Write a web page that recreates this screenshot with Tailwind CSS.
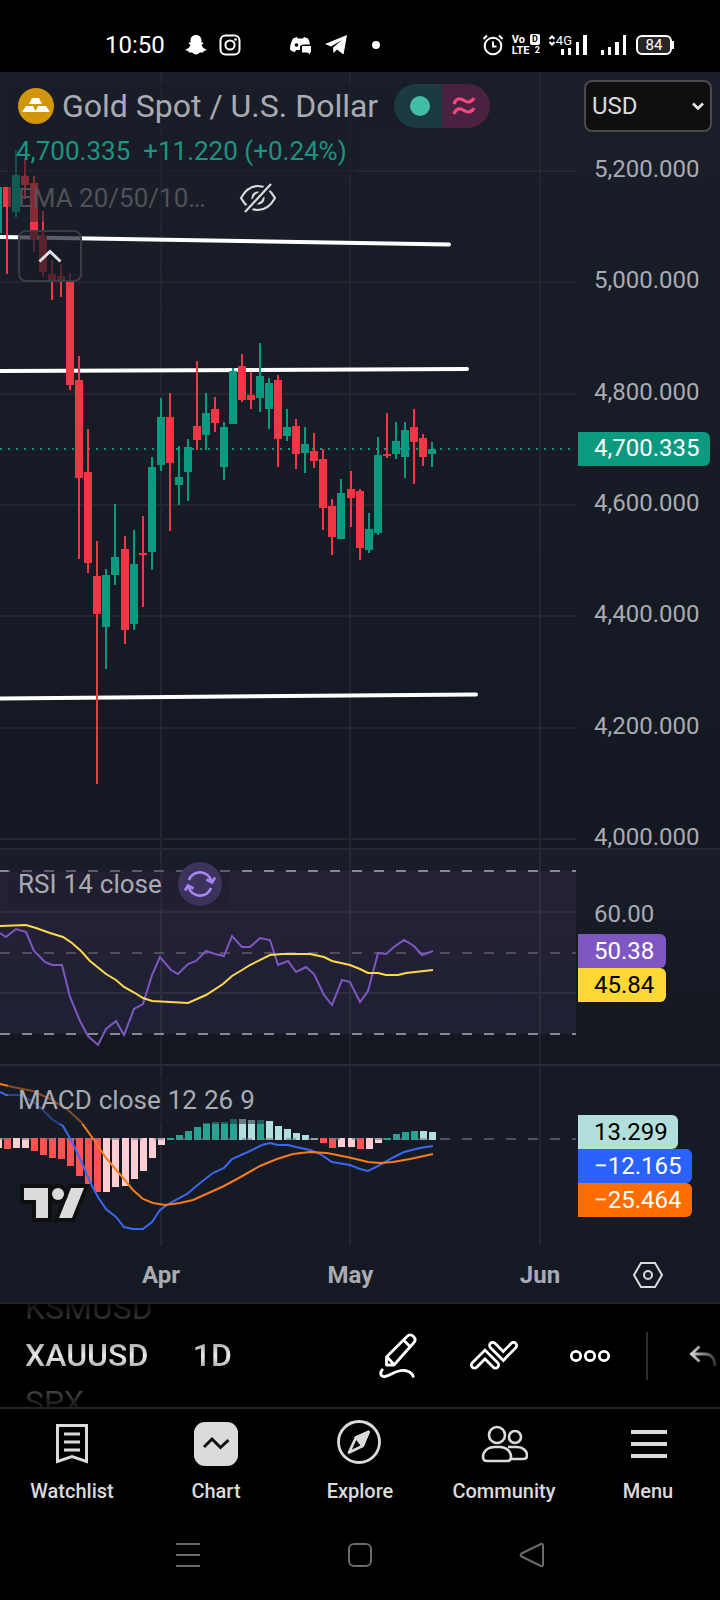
<!DOCTYPE html>
<html lang="en">
<head>
    <meta charset="UTF-8">
    <meta name="viewport" content="width=device-width, initial-scale=1.0">
    <title>XAUUSD - Chart</title>
    <script src="https://cdn.jsdelivr.net/npm/@tailwindcss/browser@4"></script>
</head>
<body class="bg-black font-['Roboto',sans-serif] text-[#a9abb3]">
    <!-- status bar -->
    <header class="flex h-[72px] items-center bg-black pt-[18px] pr-[46px] pl-[105px] text-white">
        <span class="text-2xl leading-8">10:50</span>
        <svg class="ml-5 h-[22px] w-[22px]" viewBox="0 0 22 22" fill="currentColor"><path d="M11 1c3.500 0 5.500 2.400 5.500 5.600v2c.7 0 1.800-.2 1.900.5.1.8-1.400 1.200-1.800 1.700.6 2.400 2.300 4 4.900 4.700.1 1-1.900 1.300-2.700 1.600-.3.600-.2 1.100-.7 1.300-.9.200-2-.2-3.100.2-1.300.6-2.200 2-4 2s-2.700-1.400-4-2c-1.100-.4-2.200 0-3.100-.2-.5-.2-.4-.7-.7-1.300-.8-.3-2.800-.6-2.700-1.600 2.600-.7 4.300-2.300 4.900-4.700-.4-.5-1.900-.9-1.800-1.700.1-.7 1.200-.5 1.900-.5v-2C5.500 3.400 7.500 1 11 1z"/></svg>
        <svg class="ml-3 h-[22px] w-[22px]" viewBox="0 0 22 22" fill="none" stroke="currentColor" stroke-width="2"><rect x="1.500" y="1.500" width="19" height="19" rx="5"/><circle cx="11" cy="11" r="4.600"/><circle cx="16.500" cy="5.500" r="1.300" fill="currentColor" stroke="none"/></svg>
        <svg class="ml-12 h-[22px] w-[23px]" viewBox="0 0 23 22" fill="currentColor"><path d="M8 3 4 4.500C2 8 1 11.500 1 15.500 2.500 17 4 17.700 6 18l1-2h4v-4l3-1.500h7c-.3-2.200-1-4.200-2-6L15 3l-1 1.500H9z"/><circle cx="7.500" cy="11" r="1.800" fill="#000"/><path d="M13 12h9v6.500h-1V20.500l-2.500-2H13z"/></svg>
        <svg class="ml-3 h-[22px] w-[24px]" viewBox="0 0 24 22" fill="currentColor"><path d="M1 10 23 1l-3.500 19.500-6.500-5-3.500 3.500-.5-5.500L18 6 7 12.500z"/></svg>
        <span class="ml-6 h-2 w-2 rounded-full bg-white"></span>
        <svg class="ml-auto h-[22px] w-[22px]" viewBox="0 0 22 22" fill="none" stroke="currentColor" stroke-width="2"><circle cx="11" cy="12" r="8.300"/><path d="M11 7.500v5h3.500M1.500 5 5 1.500M20.500 5 17 1.500"/></svg>
        <span class="ml-2 flex w-7 flex-col text-[11px] leading-[11px] font-bold">
            <span class="flex justify-between">Vo<span class="rounded-xs bg-white px-[2px] text-[9px] leading-[10px] text-black">D</span></span>
            <span class="flex justify-between">LTE<span class="text-[9px] leading-[11px]">2</span></span>
        </span>
        <svg class="ml-2 h-[22px] w-2" viewBox="0 0 8 22" fill="none" stroke="currentColor" stroke-width="2"><path d="M1.500 5 4 2.500 6.500 5M1.500 8 4 10.500 6.500 8"/></svg>
        <span class="mb-2 text-[13px] leading-4">4G</span>
        <svg class="-ml-3 h-[22px] w-[28px]" viewBox="0 0 28 22" fill="currentColor"><path d="M1 15h3v6H1zM8 14h3v7H8zM16 8h3v13h-3zM23 1h4v20h-4z"/></svg>
        <svg class="ml-3 h-[22px] w-[28px]" viewBox="0 0 28 22" fill="currentColor"><path d="M1 16h3v5H1zM8 13h3v8H8zM15 8h4v13h-4zM23 1h3v20h-3z"/></svg>
        <span class="ml-2 flex h-5 w-9 items-center justify-center rounded-md border-2 border-white bg-neutral-800 text-[15px] leading-4">84</span>
        <span class="h-2 w-[2px] bg-white"></span>
    </header>

    <main>
        <!-- price pane -->
        <section class="relative grid h-[776px] grid-cols-[1fr_144px] bg-linear-to-b from-[#1a1e29] to-[#141822]">
            <svg id="price" class="h-full w-full" viewBox="0 72 576 776" preserveAspectRatio="none" fill="none">
                <path d="M0 171h576M0 282h576M0 394h576M0 505h576M0 616h576M0 728h576M0 839h576M161 72v776M350 72v776M540 72v776" stroke="#22262f" stroke-width="2"/>
                <path d="M0 449h576" stroke="#0f9a80" stroke-width="2" stroke-dasharray="2 6"/>
                <path d="M0 237 449 244.500M0 371 467 369M0 698.500 476 694.500" stroke="#fff" stroke-width="4" stroke-linecap="round"/>
                <g id="candles"></g>
            </svg>
            <div class="flex flex-col pr-2 pl-2">
                <div class="relative mt-2">
                    <label for="currency" class="sr-only">Currency</label>
                    <select id="currency" class="h-[52px] w-full appearance-none rounded-lg border-2 border-[#4a4a4a] bg-[#0f0f0f] pl-1.5 text-2xl leading-8 text-[#dbdbdb]">
                        <option>USD</option>
                        <option>EUR</option>
                    </select>
                    <svg class="pointer-events-none absolute top-5 right-2 h-3 w-3" viewBox="0 0 12 12" fill="none" stroke="#e8e8e8" stroke-width="2.500"><path d="m1 3.500 5 5 5-5"/></svg>
                </div>
                <div class="mt-[25px] -mb-[1px] flex flex-1 flex-col justify-between pl-2.5 text-2xl leading-6">
                    <span>5,200.000</span>
                    <span>5,000.000</span>
                    <span>4,800.000</span>
                    <span>4,600.000</span>
                    <span>4,400.000</span>
                    <span>4,200.000</span>
                    <span>4,000.000</span>
                </div>
            </div>
            <span class="absolute top-[360px] right-2.5 h-[34px] w-[132px] rounded-r-md bg-[#0b997f] pl-4 text-2xl leading-8 text-white">4,700.335</span>

            <div class="absolute top-3 left-2 flex flex-col items-start">
                <div class="flex h-11 items-center bg-[#191d28]/60 pl-2.5">
                    <svg class="h-9 w-9" viewBox="0 0 36 36"><circle cx="18" cy="18" r="18" fill="#d1960b"/><path d="M14 10h7l3 6H11zM8 18h7l3 6H4zM20 18h8l4 6H17z" fill="#fff"/></svg>
                    <h1 class="ml-2 text-[32px] leading-9">Gold Spot / U.S. Dollar</h1>
                    <span class="ml-4 flex h-11 overflow-hidden rounded-full">
                        <span class="flex w-12 items-center justify-center bg-[#1c3a40]"><span class="ml-1 h-5 w-5 rounded-full bg-[#42bda8]"></span></span>
                        <span class="flex w-12 items-center justify-center bg-[#4a213f]">
                            <svg class="mr-1 h-[22px] w-6" viewBox="0 0 24 22" fill="none" stroke="#f7487f" stroke-width="3.200"><path d="M2 9C4 3 8 3 12 5.500s7.500 2 10-2.500M2 19c2-6 6-6 10-3.500s7.500 2 10-2.500"/></svg>
                        </span>
                    </span>
                </div>
                <p class="h-[46px] bg-[#191d28]/60 px-2 text-[26px] leading-[46px] whitespace-pre text-[#1a9580]">4,700.335  +11.220 (+0.24%)</p>
                <div class="flex h-12 items-center bg-[#191d28]/50 px-2.5">
                    <span class="text-[26px] leading-8 text-[#4f5159]">EMA 20/50/10…</span>
                    <button aria-label="Show indicator" class="ml-8">
                        <svg class="h-8 w-10" viewBox="0 0 40 32" fill="none" stroke="#dbdbdb" stroke-width="2.200"><path d="M3 16C8 7 13 4 20 4s12 3 17 12c-5 9-10 12-17 12S8 25 3 16z"/><circle cx="20" cy="16" r="5.500"/><path d="M33 2 7 30" stroke="#181c27" stroke-width="7"/><path d="M33 2 7 30"/></svg>
                    </button>
                </div>
                <button aria-label="Collapse legend" class="mt-2 ml-2.5 flex h-[52px] w-16 items-center justify-center rounded-lg border-2 border-[#3b3d45] bg-[#171b26]/70">
                    <svg class="h-4 w-6" viewBox="0 0 24 16" fill="none" stroke="#dfe0e4" stroke-width="3"><path d="m1.500 13.500 10.500-10 10.500 10"/></svg>
                </button>
            </div>
        </section>

        <!-- rsi pane -->
        <section class="relative grid h-[216px] grid-cols-[1fr_144px] border-t-2 border-[#252933] bg-linear-to-b from-[#191d28] to-[#131720]">
            <svg class="h-full w-full" viewBox="0 1 576 214" preserveAspectRatio="none" fill="none">
                <defs>
                    <linearGradient id="band" x1="0" y1="0" x2="0" y2="1"><stop offset="0" stop-color="#252136"/><stop offset="1" stop-color="#1e2034"/></linearGradient>
                </defs>
                <rect y="22" width="576" height="163" fill="url(#band)"/>
                <path d="M0 63h576M0 144h576M161 0v215M350 0v215M540 0v215" stroke="#fff" stroke-opacity=".06" stroke-width="2"/>
                <path d="M0 22h576M0 185h576" stroke="#868892" stroke-width="2" stroke-dasharray="10 12"/>
                <path d="M0 104h576" stroke="#4f4e5c" stroke-width="2" stroke-dasharray="10 12"/>
                <polyline stroke="#7e57c2" stroke-width="2" points="0,84 6,88 16,80 26,83 34,102 45,113 52,116 62,116 70,148 80,172 88,187 98,196 106,180 116,172 124,186 134,160 143,155 152,126 160,108 171,121 178,125 188,115 196,112 206,102 215,105 224,107 232,87 242,98 250,98 260,89 270,91 278,116 288,112 296,123 306,118 314,125 324,146 332,156 342,131 350,133 360,153 368,142 378,104 386,105 394,98 404,91 414,97 422,106 433,102"/>
                <polyline stroke="#fdd94a" stroke-width="2" points="0,77 26,76 36,79 50,84 63,88 72,94 81,102 90,112 106,125 116,131 124,138 135,144 143,149 152,152 188,154 206,146 223,135 232,127 242,121 250,116 270,106 282,105 310,105 324,108 332,112 350,116 360,120 368,124 378,124 386,126 398,126 406,124 433,121"/>
            </svg>
            <div class="flex flex-col items-start pt-[50px] pl-[2px] text-2xl leading-[34px]">
                <span class="h-[34px] pl-4 leading-7">60.00</span>
                <span class="h-[34px] rounded-r-md bg-[#7e57c2] pr-3 pl-4 leading-[34px] text-white">50.38</span>
                <span class="h-[34px] rounded-r-md bg-[#fdd835] pr-3 pl-4 leading-[34px] text-black">45.84</span>
            </div>
            <div class="absolute top-2.5 left-2 flex h-12 items-center gap-4 bg-[#1b1d2a]/40 pr-2 pl-2.5">
                <span class="flex gap-[7px] text-[26px] leading-8"><span>RSI</span><span>14</span><span>close</span></span>
                <button aria-label="Refresh RSI" class="flex h-11 w-11 items-center justify-center rounded-full bg-[#3d325c]">
                    <svg class="h-8 w-8" viewBox="0 0 32 32" fill="none" stroke="#a587f5" stroke-width="2.800"><path d="M5 12a11.800 11.800 0 0 1 22.500 1.500M27 20A11.800 11.800 0 0 1 4.500 18.500M22.500 11.500l5.500 3 3-5M9.500 20.500l-5.500-3-3 5"/></svg>
                </button>
            </div>
        </section>

        <!-- macd pane -->
        <section class="relative grid h-[182px] grid-cols-[1fr_144px] border-t-2 border-[#2a2e38] bg-[#161a25]">
            <svg class="h-full w-full" viewBox="0 1 576 180" preserveAspectRatio="none" fill="none">
                <path d="M161 0v181M350 0v181M540 0v181" stroke="#22262f" stroke-width="2"/>
                <g id="histogram"></g>
                <path d="M0 74h576" stroke="#787b86" stroke-opacity=".6" stroke-width="2" stroke-dasharray="10 12"/>
                <polyline stroke="#3a68ee" stroke-width="2" points="0,27 6,30 20,30 32,36 42,44 53,55 63,61 72,77 82,98 90,117 98,132 106,144 116,152 124,162 133,164 143,164 152,157 160,145 170,138 187,129 200,118 213,108 224,103 232,94 250,86 262,80 270,78 278,80 288,80 296,82 310,85 320,89 332,97 350,100 360,104 368,106 378,101 394,92 404,87 420,83 433,81"/>
                <polyline stroke="#f57c1f" stroke-width="2" points="0,19 13,22 33,26 50,34 67,44 81,57 94,75 106,93 124,114 133,125 143,134 153,138 165,140 180,138 193,135 213,126 224,121 237,114 260,101 277,94 293,89 310,87 327,88 347,92 360,95 368,97 380,98 393,97 410,94 433,89"/>
            </svg>
            <div class="flex flex-col items-start pt-[49px] pl-[2px] text-2xl text-white">
                <span class="h-[34px] rounded-r-md bg-[#b2dfdb] pr-2.5 pl-4 leading-[34px] text-black">13.299</span>
                <span class="h-[34px] rounded-r-md bg-[#2962ff] pr-2.5 pl-4 leading-[34px]">−12.165</span>
                <span class="h-[34px] rounded-r-md bg-[#ff6d00] pr-2.5 pl-4 leading-[34px]">−25.464</span>
            </div>
            <div class="absolute top-2.5 left-2 flex h-12 gap-[7px] bg-[#171b26]/50 px-2.5 text-[26px] leading-[48px]"><span>MACD</span><span>close</span><span>12</span><span>26</span><span>9</span></div>
            <svg class="absolute bottom-[22px] left-5 h-[42px] w-[70px]" viewBox="0 0 70 42" fill="#dbdbdb" stroke="#0f0f0f" stroke-width="8" paint-order="stroke"><path d="M4 6h24v30H16V18H4zM51 6h13L52 36H39z"/><circle cx="38" cy="12" r="6"/></svg>
        </section>

        <!-- time axis -->
        <section class="grid h-[56px] grid-cols-[1fr_144px] items-center bg-[#151924] pt-[2px]">
            <div class="flex justify-between pr-1 pl-[129px] text-2xl leading-8 font-bold">
                <span class="w-16 text-center">Apr</span>
                <span class="w-16 text-center">May</span>
                <span class="w-16 text-center">Jun</span>
            </div>
            <button aria-label="Chart settings" class="flex justify-center">
                <svg class="h-7 w-8" viewBox="0 0 32 28" fill="none" stroke="#dbdbdb" stroke-width="2"><path d="M9 2h14l7 12-7 12H9L2 14z"/><circle cx="16" cy="14" r="4"/></svg>
            </button>
        </section>
    </main>

    <!-- symbol toolbar -->
    <section class="flex h-[107px] items-center border-y-2 border-[#242424] bg-black">
        <div class="flex h-full flex-col items-start justify-center overflow-hidden pl-[25px] text-[32px] leading-[47px]">
            <button class="shrink-0 bg-linear-to-b from-black to-[#555] bg-clip-text text-transparent">KSMUSD</button>
            <button class="shrink-0 bg-linear-to-b from-[#777] via-[#ececec] to-[#777] bg-clip-text font-medium text-transparent">XAUUSD</button>
            <button class="shrink-0 bg-linear-to-t from-black to-[#666] bg-clip-text text-transparent">SPX</button>
        </div>
        <button class="ml-10 bg-linear-to-b from-[#777] via-[#ececec] to-[#777] bg-clip-text text-[32px] leading-[47px] font-medium text-transparent">1D</button>
        <div class="ml-auto flex items-center gap-12 text-white">
            <button aria-label="Draw">
                <svg class="h-12 w-12" viewBox="0 0 48 48" fill="none" stroke="currentColor" stroke-width="2.800" stroke-linejoin="round"><path d="M12.500 33v-8L33 4.500c2-2 4.500-2 6.500 0s2 4.500 0 6.500L20 33zM13 25l7 7.500M29.500 8l7 7"/><path d="M9 37c-4 4-2.500 8 2 7.500C17 43.500 23 37 31 38.500c5 1 8 3 8.500 7"/></svg>
            </button>
            <button aria-label="Indicators">
                <svg class="h-12 w-12" viewBox="0 0 48 48" fill="none" stroke-linecap="round">
                    <path d="m4.500 33 10.500-10.500L25.500 33M22.700 13.500l10.600 10.500L43.500 13.500" stroke="#fff" stroke-width="9"/>
                    <path d="m4.500 33 10.500-10.500L25.500 33M22.700 13.500l10.600 10.500L43.500 13.500" stroke="#000" stroke-width="3.500"/>
                </svg>
            </button>
            <button aria-label="More">
                <svg class="h-12 w-12" viewBox="0 0 48 48" fill="none" stroke="currentColor" stroke-width="2.800"><circle cx="10" cy="24" r="4.700"/><circle cx="24" cy="24" r="4.700"/><circle cx="38" cy="24" r="4.700"/></svg>
            </button>
        </div>
        <span class="ml-8 h-12 w-[2px] bg-[#2e2e2e]"></span>
        <button aria-label="Undo" class="flex w-[72px] justify-end">
            <svg class="h-6 w-8" viewBox="0 0 32 24" fill="none" stroke="url(#fade)" stroke-width="2.800">
                <defs><linearGradient id="fade" gradientUnits="userSpaceOnUse" x1="2" y1="0" x2="30" y2="0"><stop offset="0" stop-color="#ddd"/><stop offset="1" stop-color="#222"/></linearGradient></defs>
                <path d="M11.500 2.500 3.500 10l8 7.500M3.500 10H17c6 0 10 4 10 12"/>
            </svg>
        </button>
    </section>

    <!-- app navigation -->
    <nav class="grid grid-cols-5 bg-black text-center text-xl leading-6 font-medium text-[#dbdbdb]">
        <a href="#" class="flex flex-col items-center gap-[11px] pt-[11px]">
            <svg class="h-12 w-12" viewBox="0 0 48 48" fill="none" stroke="currentColor" stroke-width="3"><path d="M9.500 5.500h29v36L24 36.500 9.500 41.500zM16 14h16M16 22h16M16 30h16"/></svg>
            Watchlist
        </a>
        <a href="#" class="flex flex-col items-center gap-[11px] pt-[11px]">
            <svg class="h-12 w-12" viewBox="0 0 48 48" fill="none"><rect x="2" y="2" width="44" height="44" rx="11" fill="#dbdbdb"/><path d="m12 27 8-8 8.500 8.500 8-7.500" stroke="#0f0f0f" stroke-width="3"/></svg>
            Chart
        </a>
        <a href="#" class="flex flex-col items-center gap-[11px] pt-[11px]">
            <svg class="h-12 w-12" viewBox="0 0 48 48" fill="none" stroke="currentColor" stroke-width="2.800" stroke-linejoin="round"><circle cx="23" cy="22" r="20.500"/><path d="M32.500 12 20 17.500l-7 15L26.500 26z"/><path d="M32.500 12 20 17.500l6.500 8.500z" fill="currentColor"/></svg>
            Explore
        </a>
        <a href="#" class="flex flex-col items-center gap-[11px] pt-[11px]">
            <svg class="h-12 w-12" viewBox="0 0 48 48" fill="none" stroke="currentColor" stroke-width="2.600"><circle cx="17" cy="15" r="8"/><circle cx="35" cy="17" r="6"/><path d="M15 27h5c7 0 11 5 11 10 0 3-1.500 4-4 4H7c-2.500 0-4-1-4-4 0-5 4-10 12-10zM28 27h9c6 0 10 4 10 8.500 0 2.500-1.500 3.500-4 3.500H31"/></svg>
            Community
        </a>
        <a href="#" class="flex flex-col items-center gap-[11px] pt-[11px]">
            <svg class="h-12 w-12" viewBox="0 0 48 48" stroke="currentColor" stroke-width="4"><path d="M7 12h36M7 24h36M7 36h36"/></svg>
            Menu
        </a>
    </nav>

    <!-- system navigation -->
    <footer class="flex h-[96px] items-center justify-center gap-[146px] bg-black pt-2">
        <button aria-label="Recent apps"><svg class="h-[26px] w-[26px]" viewBox="0 0 26 26" stroke="#6b6b6b" stroke-width="2"><path d="M1 2h24M1 13h24M1 24h24"/></svg></button>
        <button aria-label="Home"><svg class="h-[26px] w-[26px]" viewBox="0 0 26 26" fill="none" stroke="#6b6b6b" stroke-width="2"><rect x="2" y="2" width="22" height="22" rx="5"/></svg></button>
        <button aria-label="Back"><svg class="h-[26px] w-[26px]" viewBox="0 0 26 26" fill="none" stroke="#6b6b6b" stroke-width="2" stroke-linejoin="round"><path d="M2.500 11.500 22 2c1-.4 2 0 2 1.500v19c0 1.500-1 1.900-2 1.500L2.500 14.500c-1.200-.9-1.200-2.100 0-3z"/></svg></button>
    </footer>

    <script>
        const UP = '#0b997f';
        const DOWN = '#f23645';
        const barX = i => Math.round(7 + (i - 1) * 9.04);

        // [direction, body top, body bottom, wick top, wick bottom]
        const candles = [
            [1, 187, 233, 187, 233], [0, 187, 207, 187, 274], [1, 175, 212, 150, 217], [0, 176, 185, 158, 199],
            [0, 183, 240, 176, 252], [0, 236, 272, 211, 277], [0, 274, 280, 260, 300], [0, 276, 280, 264, 297],
            [0, 281, 385, 273, 390], [0, 380, 478, 356, 559], [0, 472, 563, 429, 573], [0, 576, 614, 541, 784],
            [1, 575, 627, 569, 669], [1, 557, 575, 504, 585], [0, 549, 630, 536, 644], [1, 564, 624, 530, 630],
            [0, 553, 555, 516, 607], [1, 467, 552, 457, 570], [1, 417, 465, 398, 471], [0, 417, 463, 393, 531],
            [1, 477, 485, 446, 505], [1, 447, 472, 439, 501], [0, 426, 440, 361, 450], [1, 413, 435, 393, 450],
            [0, 409, 423, 397, 432], [1, 427, 467, 422, 480], [1, 371, 424, 368, 424], [0, 366, 400, 354, 402],
            [0, 395, 400, 372, 409], [1, 376, 398, 343, 412], [1, 383, 409, 378, 429], [0, 380, 439, 375, 467],
            [1, 427, 436, 409, 441], [0, 426, 454, 419, 469], [1, 444, 453, 427, 473], [0, 451, 461, 433, 468],
            [0, 459, 508, 449, 530], [0, 506, 537, 499, 555], [1, 493, 539, 479, 539], [0, 489, 498, 471, 527],
            [0, 491, 548, 489, 560], [1, 529, 550, 513, 553], [1, 455, 533, 437, 535], [0, 454, 456, 413, 458],
            [1, 441, 454, 422, 459], [1, 430, 457, 422, 478], [0, 427, 442, 409, 484], [0, 438, 457, 434, 466],
            [1, 449, 454, 442, 467]
        ];
        document.getElementById('candles').innerHTML = candles.map(([up, top, bottom, high, low], i) => {
            const x = barX(i);
            return `<g fill="${up ? UP : DOWN}"><rect x="${x - 1}" y="${high}" width="2" height="${low - high}"/><rect x="${x - 4}" y="${top}" width="8" height="${bottom - top}"/></g>`;
        }).join('');

        const hist = [-10, -11, -10, -10, -13, -17, -20, -21, -28, -38, -46, -54, -54, -49, -48, -41, -33, -20, -7,
            2, 5, 9, 13, 17, 18, 18, 21, 21, 20, 20, 19, 14, 11, 7, 5, 2, -5, -10, -9, -9, -11, -11, -5, 2, 6, 8, 9, 9, 8];
        const shades = 'prpprrrrrrrrpppppppggggggggllgllllllrrpprppggggll';
        const fills = { r: '#ff5252', p: '#ffcdd2', g: '#2aa293', l: '#b2dfdb' };
        document.getElementById('histogram').innerHTML = hist.map((h, i) =>
            `<rect x="${barX(i) - 3}" y="${h < 0 ? 73 : 75 - h}" width="7" height="${Math.abs(h)}" fill="${fills[shades[i]]}"/>`
        ).join('');
    </script>
</body>
</html>
